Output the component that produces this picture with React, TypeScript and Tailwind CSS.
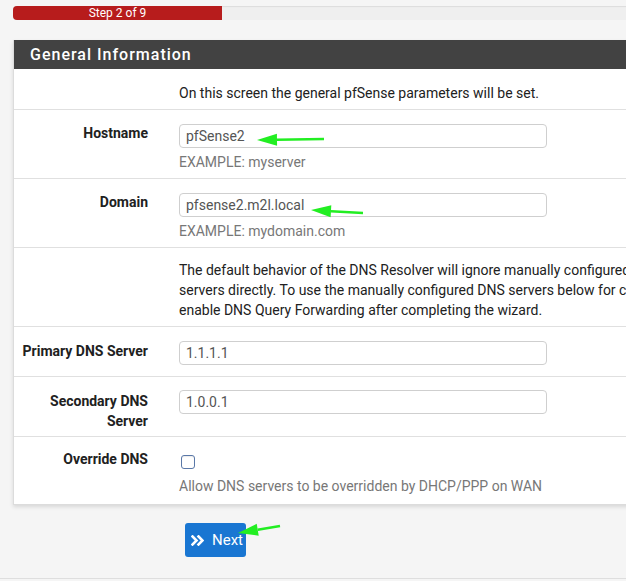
import React from "react";

const font = { fontFamily: "Roboto, 'Liberation Sans', sans-serif" };

// green annotation arrow: tip at (x1,y1), tail at (x2,y2)
const Arrow: React.FC<{ x1: number; y1: number; x2: number; y2: number }> = ({ x1, y1, x2, y2 }) => {
  const ang = Math.atan2(y2 - y1, x2 - x1);
  const len = 20;
  const half = 6;
  const bx = x1 + Math.cos(ang) * len;
  const by = y1 + Math.sin(ang) * len;
  const px = -Math.sin(ang) * half;
  const py = Math.cos(ang) * half;
  return (
    <g>
      <line x1={bx} y1={by} x2={x2} y2={y2} stroke="#22ee22" strokeWidth={2.5} />
      <polygon points={`${x1},${y1} ${bx + px},${by + py} ${bx - px},${by - py}`} fill="#22ee22" />
    </g>
  );
};

const Row: React.FC<{ label?: React.ReactNode; children: React.ReactNode; last?: boolean; pt?: string }> = ({
  label,
  children,
  last,
  pt = "pt-[13px]",
}) => (
  <div className={`flex ${last ? "" : "border-b border-[#e0e0e0]"}`}>
    <div className={`w-[150px] shrink-0 pr-4 text-right text-sm font-bold text-[#212121] leading-5 ${pt}`}>{label}</div>
    <div className="pl-[15px] flex-1">{children}</div>
  </div>
);

const Input: React.FC<{ value: string }> = ({ value }) => (
  <div className="w-[368px] h-[24px] border border-[#cfcfcf] rounded-[4px] px-[6px] text-sm leading-[22px] text-[#555]">
    {value}
  </div>
);

const Hint: React.FC<{ children: React.ReactNode }> = ({ children }) => (
  <div className="text-sm leading-5 text-[#777] mt-[4px] pb-[6px]">{children}</div>
);

export default function App() {
  return (
    <div className="relative w-[626px] h-[581px] overflow-hidden bg-[#f5f5f5]" style={font}>
      {/* progress */}
      <div className="pt-[6px] pl-[13px]">
        <div className="h-[14px] w-[700px] rounded-l-[4px] bg-[#efefef] shadow-[inset_0_1px_1px_rgba(0,0,0,0.08)] flex">
          <div className="w-[209px] h-full bg-[#b71c1c] rounded-l-[4px] text-white text-xs leading-[14px] text-center">
            Step 2 of 9
          </div>
        </div>
      </div>

      {/* panel */}
      <div className="ml-[13px] mt-[20px] w-[700px] bg-white border-x border-b border-[#dcdcdc] shadow-[0_2px_4px_rgba(0,0,0,0.12)]">
        <div className="h-[29px] bg-[#424242] px-[16px] text-white text-base font-medium tracking-[1px] leading-[29px]">
          General Information
        </div>

        <div className="border-b border-[#e0e0e0] flex">
          <div className="w-[150px] shrink-0" />
          <div className="pl-[15px] pt-[14px] pb-[6px] text-sm leading-5 text-[#212121]">
            On this screen the general pfSense parameters will be set.
          </div>
        </div>

        <Row label="Hostname">
          <div className="pt-[14px]">
            <Input value="pfSense2" />
            <Hint>EXAMPLE: myserver</Hint>
          </div>
        </Row>

        <Row label="Domain">
          <div className="pt-[14px]">
            <Input value="pfsense2.m2l.local" />
            <Hint>EXAMPLE: mydomain.com</Hint>
          </div>
        </Row>

        <Row>
          <div className="pt-[12px] pb-[6px] pr-[20px] text-sm leading-5 text-[#212121] whitespace-nowrap">
            The default behavior of the DNS Resolver will ignore manually configured DNS servers for client queries and query root DNS
            <br />
            servers directly. To use the manually configured DNS servers below for client queries, visit Services &gt; DNS Resolver and
            <br />
            enable DNS Query Forwarding after completing the wizard.
          </div>
        </Row>

        <Row label="Primary DNS Server" pt="pt-[14px]">
          <div className="pt-[14px] pb-[11px]">
            <Input value="1.1.1.1" />
          </div>
        </Row>

        <Row label={<>Secondary DNS<br />Server</>} pt="pt-[14px]">
          <div className="pt-[13px] pb-[22px]">
            <Input value="1.0.0.1" />
          </div>
        </Row>

        <Row label="Override DNS" last pt="pt-[12px]">
          <div className="pt-[18px] pb-[8px]">
            <div className="ml-[2px] w-[14px] h-[14px] border border-[#5a78a8] rounded-[3px] bg-white shadow-[inset_0_1px_1px_rgba(0,0,0,0.08)]" />
            <div className="text-sm leading-5 text-[#777] mt-[7px]">Allow DNS servers to be overridden by DHCP/PPP on WAN</div>
          </div>
        </Row>
      </div>

      {/* buttons */}
      <div className="pl-[185px] pt-[18px]">
        <button className="h-[34px] w-[61px] pl-[6px] bg-[#1976d2] rounded-[3px] text-white text-sm flex items-center gap-[8px]">
          <svg width="13" height="11" viewBox="0 0 13 11" fill="none" stroke="white" strokeWidth="2.6" strokeLinecap="square">
            <polyline points="1.5,1.5 5.5,5.5 1.5,9.5" />
            <polyline points="7.5,1.5 11.5,5.5 7.5,9.5" />
          </svg>
          <span className="text-[15px] pt-[1px]">Next</span>
        </button>
      </div>

      <div className="absolute left-0 right-0 top-[578px] h-[3px] border-t border-[#dedede]" />

      {/* annotations */}
      <svg className="absolute inset-0 pointer-events-none" width={626} height={581}>
        <Arrow x1={257} y1={140} x2={324} y2={139} />
        <Arrow x1={311} y1={210} x2={363} y2={213} />
        <Arrow x1={238} y1={533} x2={280} y2={526} />
      </svg>
    </div>
  );
}
